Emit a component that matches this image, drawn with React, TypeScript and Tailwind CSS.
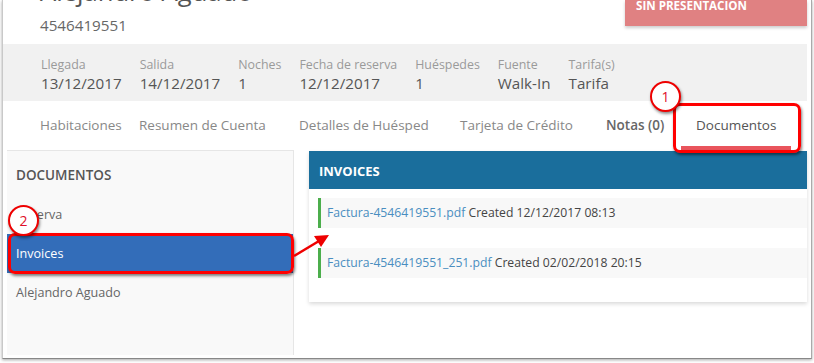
import React from "react";

const font = { fontFamily: '"Open Sans", "Liberation Sans", sans-serif' };

function Info({ label, value }: { label: string; value: string }) {
  return (
    <div className="flex flex-col">
      <div className="text-[12.4px] leading-[16px] text-[#9a9a9a] whitespace-nowrap">{label}</div>
      <div className="text-[15.2px] leading-[20px] text-[#555] whitespace-nowrap">{value}</div>
    </div>
  );
}

function Tab({ label, w, bold, active }: { label: string; w: string; bold?: boolean; active?: boolean }) {
  return (
    <div
      className={
        "h-[49px] box-border pt-[15px] pl-[15px] text-[13.5px] leading-[18px] whitespace-nowrap " +
        w +
        (bold ? " font-semibold text-[#666]" : active ? " text-[#555]" : " text-[#888]") +
        (active ? " border-b-[4px] border-[#e9545c]" : "")
      }
    >
      {label}
    </div>
  );
}

function Row({ file, date }: { file: string; date: string }) {
  return (
    <div className="h-[30px] box-border border-l-[3px] border-[#4cae4c] bg-[#f8f8f8] pl-[6px] pt-[7px] text-[12.2px] leading-[16px] whitespace-nowrap">
      <span className="text-[#4a8ec0]">{file}</span>
      <span className="text-[#444]"> Created {date}</span>
    </div>
  );
}

function Circle({ n, cls }: { n: string; cls: string }) {
  return (
    <div
      className={
        "absolute w-[31px] h-[31px] rounded-full bg-white border-[2.5px] border-[#e00] shadow-[1px_2px_3px_rgba(0,0,0,0.45)] flex items-center justify-center text-[14px] text-[#e0102a] " +
        cls
      }
    >
      {n}
    </div>
  );
}

export default function App() {
  return (
    <div className="relative w-[814px] h-[363px] bg-white overflow-hidden" style={font}>
      <div className="ml-[2px] w-[810px] h-[359px] box-border border-l border-r border-b border-l-[#c9c9c9] border-r-[#aaa] border-b-[#888] shadow-[0_1px_3px_rgba(0,0,0,0.35)] bg-white overflow-hidden">
        <div className="w-[804px]">
          {/* header */}
          <div className="flex justify-between h-[44px]">
            <div className="pl-[37px] flex flex-col">
              <div className="mt-[-22px] text-[25.6px] leading-[28px] text-[#555] whitespace-nowrap">Alejandro Aguado</div>
              <div className="mt-[9px] text-[15.2px] leading-[20px] text-[#666]">4546419551</div>
            </div>
            <div className="w-[182px] h-[26px] bg-[#e08182] shadow-[0_2px_3px_rgba(0,0,0,0.2)] pl-[11px] box-border">
              <div className="mt-[-1px] text-[11.6px] leading-[13px] font-bold text-white whitespace-nowrap">SIN PRESENTACIÓN</div>
            </div>
          </div>
          {/* info band */}
          <div className="h-[57px] box-border bg-[#f1f1f1] flex gap-[18px] pl-[38px] pt-[13px]">
            <Info label="Llegada" value="13/12/2017" />
            <Info label="Salida" value="14/12/2017" />
            <Info label="Noches" value="1" />
            <Info label="Fecha de reserva" value="12/12/2017" />
            <Info label="Huéspedes" value="1" />
            <Info label="Fuente" value="Walk-In" />
            <Info label="Tarifa(s)" value="Tarifa" />
          </div>
          {/* tabs */}
          <div className="flex pl-[22px] h-[49px]">
            <Tab label="Habitaciones" w="w-[99px]" />
            <Tab label="Resumen de Cuenta" w="w-[160px]" />
            <Tab label="Detalles de Huésped" w="w-[161px]" />
            <Tab label="Tarjeta de Crédito" w="w-[146px]" />
            <Tab label="Notas (0)" w="w-[90px]" bold />
            <Tab label="Documentos" w="w-[110px]" active />
          </div>
          {/* main */}
          <div className="flex">
            <div className="ml-[4px] w-[287px] h-[205px] box-border bg-[#f9f9f9] border-t border-r border-[#e6e6e6]">
              <div className="h-[44px] box-border pt-[16px] pl-[9px] text-[13.5px] leading-[16px] font-semibold text-[#555]">DOCUMENTOS</div>
              <div className="h-[39px] box-border pt-[12px] pl-[9px] text-[12.6px] leading-[16px] text-[#666]">Reserva</div>
              <div className="h-[39px] box-border pt-[12px] pl-[9px] text-[12.6px] leading-[16px] text-white bg-[#336db9]">Invoices</div>
              <div className="h-[39px] box-border pt-[12px] pl-[9px] text-[12.6px] leading-[16px] text-[#666]">Alejandro Aguado</div>
            </div>
            <div className="ml-[15px] mt-[1px] w-[498px] self-start bg-white shadow-[0_2px_4px_rgba(0,0,0,0.15)]">
              <div className="h-[38px] box-border bg-[#1a6e9c] pt-[12px] pl-[10px] text-[13px] leading-[16px] font-bold text-white">INVOICES</div>
              <div className="pt-[9px] pb-[24px] pl-[9px] flex flex-col gap-[20px]">
                <Row file="Factura-4546419551.pdf" date="12/12/2017 08:13" />
                <Row file="Factura-4546419551_251.pdf" date="02/02/2018 20:15" />
              </div>
            </div>
          </div>
        </div>
      </div>

      {/* annotations */}
      <div className="absolute left-[673px] top-[103px] w-[128px] h-[50px] rounded-[7px] border-[3px] border-[#f00] shadow-[1px_2px_3px_rgba(0,0,0,0.5)]" />
      <Circle n="1" cls="left-[650px] top-[81px]" />
      <div className="absolute left-[8px] top-[233px] w-[286px] h-[41px] rounded-[7px] border-[3px] border-[#f00] shadow-[1px_2px_3px_rgba(0,0,0,0.5)]" />
      <Circle n="2" cls="left-[8px] top-[205px]" />
      <svg className="absolute left-0 top-0" width="814" height="363">
        <line x1="294" y1="256" x2="319" y2="241" stroke="#e00" strokeWidth="2.5" />
        <polygon points="329,235 314,236 321,247" fill="#e00" />
      </svg>
    </div>
  );
}
